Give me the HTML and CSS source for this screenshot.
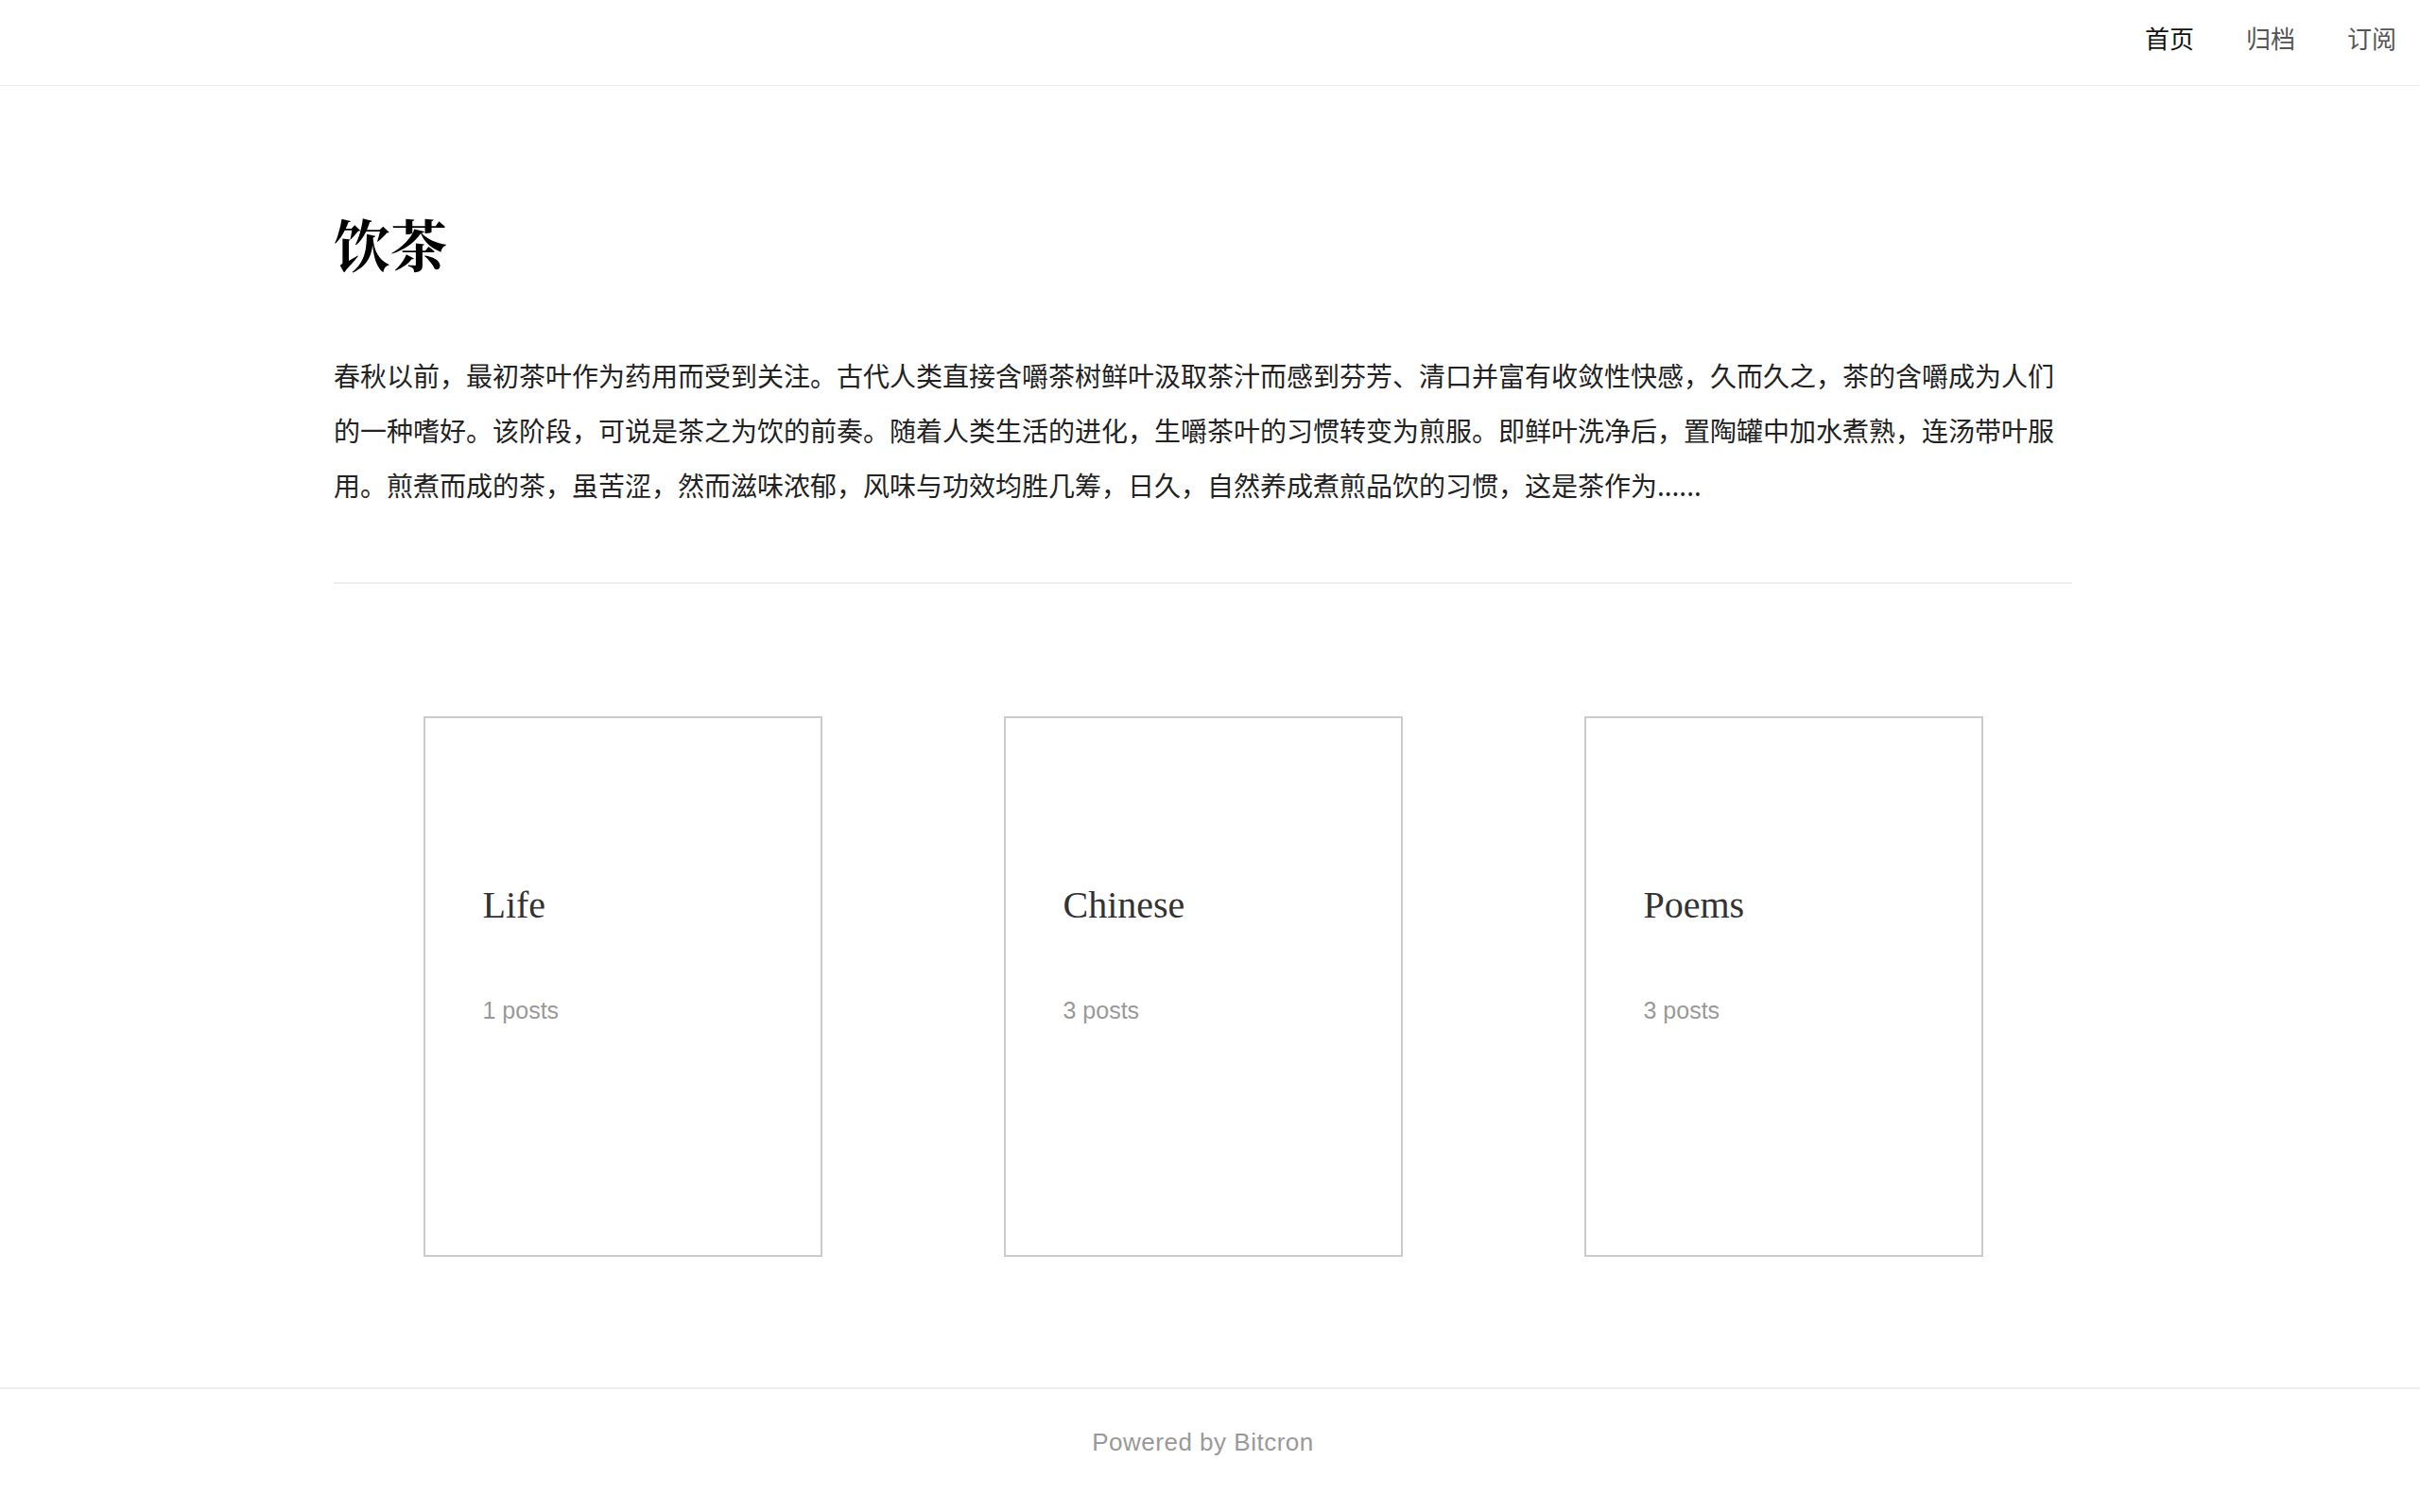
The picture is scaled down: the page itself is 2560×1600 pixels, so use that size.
FILE: index.html
```html
<!DOCTYPE html>
<html lang="zh-CN">
<head>
<meta charset="utf-8">
<title>饮茶</title>
<link rel="stylesheet" href="styles.css">
</head>
<body>
<header class="site-header">
  <nav class="nav">
    <a class="nav-link is-active" href="#">首页</a>
    <a class="nav-link" href="#">归档</a>
    <a class="nav-link" href="#">订阅</a>
  </nav>
</header>
<div class="page">
  <main class="container">
    <article class="intro">
      <h1 class="intro-title">饮茶</h1>
      <p class="intro-text">春秋以前，最初茶叶作为药用而受到关注。古代人类直接含嚼茶树鲜叶汲取茶汁而感到芬芳、清口并富有收敛性快感，久而久之，茶的含嚼成为人们的一种嗜好。该阶段，可说是茶之为饮的前奏。随着人类生活的进化，生嚼茶叶的习惯转变为煎服。即鲜叶洗净后，置陶罐中加水煮熟，连汤带叶服用。煎煮而成的茶，虽苦涩，然而滋味浓郁，风味与功效均胜几筹，日久，自然养成煮煎品饮的习惯，这是茶作为......</p>
    </article>
    <section class="categories">
      <a class="card" href="#">
        <h2 class="card-title">Life</h2>
        <div class="card-meta">1 posts</div>
      </a>
      <a class="card" href="#">
        <h2 class="card-title">Chinese</h2>
        <div class="card-meta">3 posts</div>
      </a>
      <a class="card" href="#">
        <h2 class="card-title">Poems</h2>
        <div class="card-meta">3 posts</div>
      </a>
    </section>
  </main>
</div>
<footer class="site-footer">
  <div class="footer-text">Powered by Bitcron</div>
</footer>
</body>
</html>
```
FILE: styles.css
```css
html, body {
  margin: 0;
  padding: 0;
  background: #fff;
}
body {
  font-family: "Noto Sans CJK SC", "Liberation Sans", sans-serif;
  color: #222;
}
a {
  text-decoration: none;
  color: inherit;
}

.site-header {
  height: 90px;
  border-bottom: 1px solid #ececec;
  display: flex;
  justify-content: flex-end;
}
.nav {
  display: flex;
  gap: 55px;
  padding-right: 25px;
}
.nav-link {
  font-size: 26px;
  line-height: 80px;
  color: #555;
}
.nav-link.is-active {
  color: #111;
}

.page {
  padding-right: 15px;
}
.container {
  width: 1839px;
  margin: 0 auto;
  padding-top: 130px;
}

.intro {
  border-bottom: 2px solid #eeeeee;
  padding-bottom: 74px;
}
.intro-title {
  margin: 0;
  font-family: "Noto Serif CJK SC", "Source Han Serif SC", "Noto Sans CJK SC", serif;
  font-weight: 700;
  font-size: 60px;
  line-height: 72px;
  color: #000;
}
.intro-text {
  margin: 75px 0 0;
  font-size: 28px;
  line-height: 58px;
  color: #222;
}

.categories {
  display: flex;
  justify-content: center;
  gap: 192px;
  padding-top: 140px;
  padding-bottom: 138px;
}
.card {
  display: block;
  box-sizing: border-box;
  width: 422px;
  height: 572px;
  border: 2px solid #cccccc;
  padding: 174px 0 0 61px;
}
.card-title {
  margin: 0;
  font-family: "Liberation Serif", serif;
  font-weight: 400;
  font-size: 40px;
  line-height: 48px;
  color: #333;
}
.card-meta {
  margin-top: 72px;
  font-family: "Liberation Sans", sans-serif;
  font-size: 25px;
  line-height: 30px;
  color: #999;
}

.site-footer {
  border-top: 2px solid #eeeeee;
  padding-right: 15px;
  padding-top: 41px;
  text-align: center;
}
.footer-text {
  font-family: "Liberation Sans", sans-serif;
  font-size: 26px;
  line-height: 30px;
  letter-spacing: 0.5px;
  color: #999;
}
```
